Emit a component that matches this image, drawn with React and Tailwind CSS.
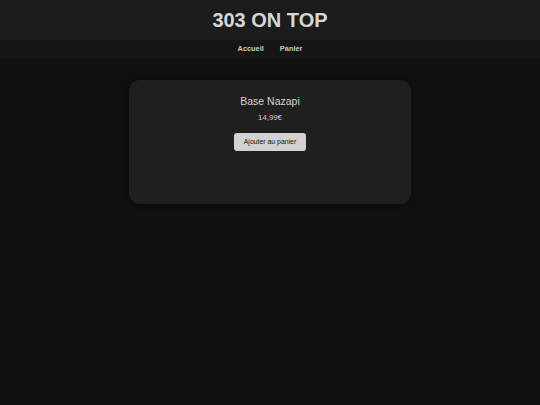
import React from 'react';

function ProductCard({ name, price }) {
  return (
    <div className="w-[282px] h-[124px] mx-auto mt-[22px] rounded-[10px] bg-[#1f1f1f] shadow-[0_0_8px_rgba(0,0,0,0.6)] flex flex-col items-center pt-[14px]">
      <h2 className="text-[10.5px] leading-[14px] text-[#d4d4d4]">{name}</h2>
      <p className="mt-[4px] text-[7.8px] leading-[12px] text-[#d0d0d0]">{price}</p>
      <button className="mt-[9px] w-[72px] h-[18px] rounded-[3px] bg-[#d2d2d2] text-[6.9px] text-[#111]">
        Ajouter au panier
      </button>
    </div>
  );
}

export default function App() {
  return (
    <div className="min-h-[405px] bg-[#111111] font-['Liberation_Sans',Arial,sans-serif]">
      <header className="h-[40px] bg-[#1c1c1c] flex items-center justify-center">
        <h1 className="text-[20px] font-bold text-[#d6d6d6] leading-none">303 ON TOP</h1>
      </header>
      <nav className="h-[18px] bg-[#161616] flex items-center justify-center gap-[16px]">
        <a className="text-[7.4px] font-bold text-[#c8c8c8]">Accueil</a>
        <a className="text-[7.4px] font-bold text-[#c8c8c8]">Panier</a>
      </nav>
      <main>
        <ProductCard name="Base Nazapi" price="14,99€" />
      </main>
    </div>
  );
}
